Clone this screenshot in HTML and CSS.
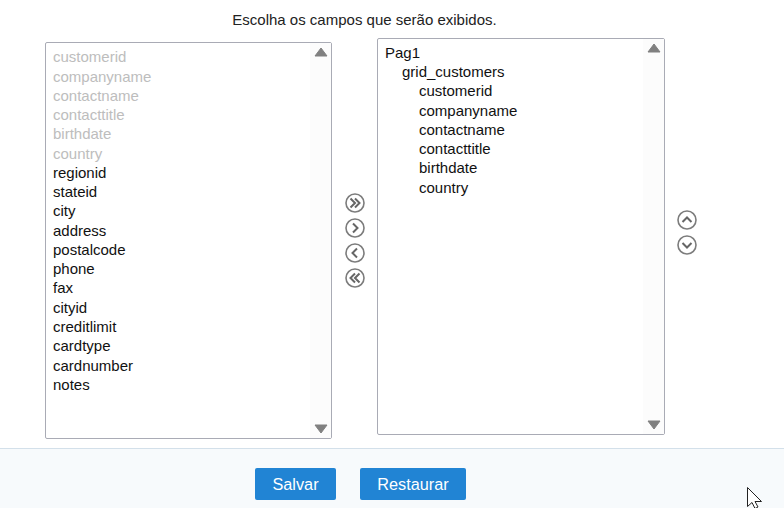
FILE: index.html
```html
<!DOCTYPE html>
<html lang="pt">
<head>
    <meta charset="UTF-8">
    <title>Campos</title>
    <link rel="stylesheet" href="styles.css">
</head>
<body>
    <p class="intro">Escolha os campos que serão exibidos.</p>

    <div class="picker">
        <div class="list list-source">
            <ul class="items">
                <li class="used">customerid</li>
                <li class="used">companyname</li>
                <li class="used">contactname</li>
                <li class="used">contacttitle</li>
                <li class="used">birthdate</li>
                <li class="used">country</li>
                <li>regionid</li>
                <li>stateid</li>
                <li>city</li>
                <li>address</li>
                <li>postalcode</li>
                <li>phone</li>
                <li>fax</li>
                <li>cityid</li>
                <li>creditlimit</li>
                <li>cardtype</li>
                <li>cardnumber</li>
                <li>notes</li>
            </ul>
            <div class="scrollbar">
                <svg class="arrow" viewBox="0 0 14 10"><path d="M7 1 13 9H1z"/></svg>
                <svg class="arrow" viewBox="0 0 14 10"><path d="M1 1h12L7 9z"/></svg>
            </div>
        </div>

        <div class="moves">
            <svg class="round" viewBox="0 0 20 20"><circle cx="10" cy="10" r="9"/><path class="chevron" d="M5.500 5.500 10 10l-4.500 4.500M10 5.500l4.500 4.500L10 14.500"/></svg>
            <svg class="round" viewBox="0 0 20 20"><circle cx="10" cy="10" r="9"/><path class="chevron" d="M8 5.500 12.500 10 8 14.500"/></svg>
            <svg class="round" viewBox="0 0 20 20"><circle cx="10" cy="10" r="9"/><path class="chevron" d="M12 5.500 7.500 10l4.500 4.500"/></svg>
            <svg class="round" viewBox="0 0 20 20"><circle cx="10" cy="10" r="9"/><path class="chevron" d="M10 5.500 5.500 10l4.500 4.500M14.500 5.500 10 10l4.500 4.500"/></svg>
        </div>

        <div class="list list-target">
            <ul class="items">
                <li>Pag1</li>
                <li class="level-1">grid_customers</li>
                <li class="level-2">customerid</li>
                <li class="level-2">companyname</li>
                <li class="level-2">contactname</li>
                <li class="level-2">contacttitle</li>
                <li class="level-2">birthdate</li>
                <li class="level-2">country</li>
            </ul>
            <div class="scrollbar">
                <svg class="arrow" viewBox="0 0 14 10"><path d="M7 1 13 9H1z"/></svg>
                <svg class="arrow" viewBox="0 0 14 10"><path d="M1 1h12L7 9z"/></svg>
            </div>
        </div>

        <div class="order">
            <svg class="round" viewBox="0 0 20 20"><circle cx="10" cy="10" r="9"/><path class="chevron" d="M5.500 12 10 7.500l4.500 4.500"/></svg>
            <svg class="round" viewBox="0 0 20 20"><circle cx="10" cy="10" r="9"/><path class="chevron" d="M5.500 8 10 12.500 14.500 8"/></svg>
        </div>
    </div>

    <div class="footer">
        <button class="btn btn-save">Salvar</button>
        <button class="btn btn-reset">Restaurar</button>
    </div>

    <svg class="cursor" viewBox="0 0 16 22"><path d="M.5.500v19l4.500-4 3 6 3-1.500-3-5.500h6.500z"/></svg>
</body>
</html>
```

FILE: styles.css
```css
* {
    margin: 0;
    padding: 0;
    box-sizing: border-box;
}

body {
    font-family: "Liberation Sans", Arial, sans-serif;
    font-size: 15px;
    color: #111;
    background-color: #fff;
    height: 508px;
    overflow: hidden;
    position: relative;
}

.intro {
    height: 38px;
    padding: 11px 55px 0 0;
    text-align: center;
    font-size: 15px;
    line-height: 18px;
    color: #222;
}

.picker {
    display: flex;
    align-items: flex-start;
    padding-left: 45px;
    height: 410px;
}

.list {
    display: flex;
    border: 1px solid #a9abb5;
    border-radius: 2px;
}

.list-source {
    width: 287px;
    height: 397px;
    margin-top: 4px;
}

.list-target {
    width: 288px;
    height: 397px;
}

.items {
    flex: 1;
    list-style: none;
    padding: 4.280px 0 0 7px;
    line-height: 19.260px;
}

.list-target .items {
    padding-top: 3.840px;
}

.used {
    color: #bdbdbd;
}

.level-1 {
    padding-left: 17px;
}

.level-2 {
    padding-left: 34px;
}

.scrollbar {
    width: 21px;
    display: flex;
    flex-direction: column;
    justify-content: space-between;
    align-items: center;
    padding: 4px 0;
    background-color: #fcfcfc;
}

.arrow {
    width: 14px;
    height: 10px;
    fill: #808080;
    stroke: #808080;
    stroke-linejoin: round;
}

.moves {
    width: 45px;
    display: flex;
    flex-direction: column;
    align-items: center;
    gap: 5px;
    margin-top: 155px;
    padding-left: 1px;
}

.order {
    display: flex;
    flex-direction: column;
    gap: 5px;
    margin: 172px 0 0 12px;
}

.round {
    width: 20px;
    height: 20px;
    fill: none;
    stroke: #7c7c7c;
    stroke-width: 1.600;
}

.chevron {
    stroke: #666;
    stroke-width: 2;
}

.footer {
    display: flex;
    gap: 24px;
    height: 60px;
    padding: 19px 0 0 255px;
    background-color: #f7fafc;
    border-top: 1px solid #d3e0ea;
}

.btn {
    height: 32px;
    border: none;
    border-radius: 2px;
    background-color: #2184d4;
    color: #fff;
    font-family: inherit;
    font-size: 16.300px;
}

.btn-save {
    width: 81px;
}

.btn-reset {
    width: 106px;
}

.cursor {
    position: absolute;
    left: 747px;
    top: 487px;
    width: 16px;
    height: 22px;
    fill: #fff;
    stroke: #222;
    stroke-width: 1;
}
```
